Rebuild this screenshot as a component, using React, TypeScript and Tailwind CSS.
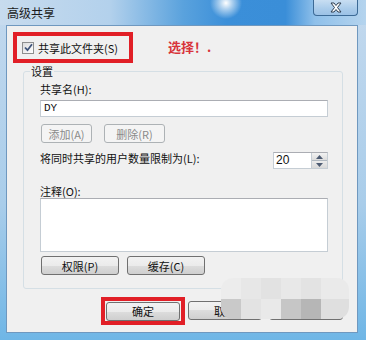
import React from "react";

const cjk = "font-['Noto_Sans_CJK_SC','Noto_Sans',sans-serif]";

function WinButton({ children, w, disabled = false }: { children: React.ReactNode; w: string; disabled?: boolean }) {
  return (
    <div
      className={
        `${w} h-[19px] flex items-center justify-center rounded-[3px] border text-[11px] leading-[14px] ` +
        (disabled
          ? "border-[#adb2b5] bg-[#f4f4f4] text-[#8a8a8a]"
          : "border-[#707070] bg-[linear-gradient(180deg,#f2f2f2_0%,#ebebeb_50%,#dddddd_50%,#cfcfcf_100%)] text-[#111]")
      }
    >
      {children}
    </div>
  );
}

export default function App() {
  return (
    <div className={`w-[366px] h-[340px] relative overflow-hidden bg-[linear-gradient(180deg,#c3d9ee_0%,#a9cdea_60%,#6fb6e6_100%)] ${cjk}`}>
      {/* title bar */}
      <div className="h-[25px] flex items-center pl-[7px] bg-[radial-gradient(circle_at_226px_3px,#ffffff_0px,rgba(255,255,255,0.6)_6px,rgba(255,255,255,0)_16px),linear-gradient(90deg,#c7dbee_0%,#b3d1ec_30%,#5aa2dd_50%,#3b8fd9_62%,#3a8ed8_78%,#8fc0ea_86%,#b5d4ee_100%)]">
        <span className="text-[12px] leading-[16px] text-[#1b1b1b]">高级共享</span>
      </div>
      {/* close button */}
      <div className="absolute top-0 left-[313px] w-[45px] h-[16px] rounded-b-[4px] border border-t-0 border-[#3c6a96] bg-[linear-gradient(180deg,#c8def2_0%,#a9cbea_60%,#9cc2e6_100%)] flex items-center justify-center">
        <svg width="14" height="11" viewBox="0 0 14 11">
          <path d="M2 1 L5 1 L7 3.5 L9 1 L12 1 L8.5 5.5 L12 10 L9 10 L7 7.5 L5 10 L2 10 L5.5 5.5 Z" fill="#ffffff" stroke="#2f3f52" strokeWidth="1" strokeLinejoin="round" />
        </svg>
      </div>

      {/* client area */}
      <div className="ml-[6px] w-[352px] h-[308px] bg-[#f0f0f0] border border-[#6f98bf] relative">
        {/* row: checkbox red box + 选择 */}
        <div className="flex items-start pt-[6px] pl-[6px]">
          <div className="w-[120px] h-[31px] border-4 border-[#e11f27] flex items-center pl-[5px] gap-[4px]">
            <div className="w-[12px] h-[12px] border border-[#8e8f8f] bg-[linear-gradient(135deg,#dcdcdc,#ffffff)] flex items-center justify-center">
              <svg width="9" height="9" viewBox="0 0 9 9">
                <path d="M1 4.5 L3.5 7.2 L8 1.2" fill="none" stroke="#3f547a" strokeWidth="1.8" />
              </svg>
            </div>
            <span className="text-[11px] leading-[14px] text-[#111] whitespace-nowrap">共享此文件夹(S)</span>
          </div>
          <span className="ml-[35px] mt-[7px] text-[13px] leading-[16px] font-bold text-[#d8343b] whitespace-nowrap">选择！.</span>
        </div>

        {/* group box */}
        <fieldset className="ml-[16px] mt-[1px] w-[320px] border border-[#d5dfe5] rounded-[3px] pl-[16px] pr-[14px] pb-[13px]">
          <legend className="ml-[-10px] px-[1px] text-[11px] leading-[14px] text-[#111]">设置</legend>
          <div className="mt-[4px] text-[11px] leading-[14px] text-[#111]">共享名(H):</div>
          <div className="mt-[4px] h-[17px] w-[288px] bg-white border border-[#c5cdd4] border-t-[#abadb3] flex items-center pl-[3px] font-['Liberation_Mono',monospace] text-[11px] text-[#111]">
            DY
          </div>
          <div className="mt-[7px] ml-[1px] flex gap-[12px]">
            <WinButton w="w-[51px]" disabled>添加(A)</WinButton>
            <WinButton w="w-[61px]" disabled>删除(R)</WinButton>
          </div>
          <div className="mt-[9px] flex items-start justify-between">
            <span className="mt-[-1px] text-[11px] leading-[14px] text-[#111]">将同时共享的用户数量限制为(L):</span>
            <div className="flex h-[17px] w-[55px] bg-white border border-[#c5cdd4] border-t-[#abadb3]">
              <span className="flex-1 pl-[2px] font-['Liberation_Sans',sans-serif] text-[12px] leading-[15px] text-[#111]">20</span>
              <div className="w-[16px] flex flex-col border-l border-[#c5cdd4]">
                <div className="flex-1 flex items-center justify-center bg-[linear-gradient(180deg,#f2f2f2,#dcdcdc)] border-b border-[#b0b8c0]">
                  <svg width="7" height="4" viewBox="0 0 7 4"><path d="M0 4 L3.5 0 L7 4 Z" fill="#4d5b72" /></svg>
                </div>
                <div className="flex-1 flex items-center justify-center bg-[linear-gradient(180deg,#ececec,#d8d8d8)]">
                  <svg width="7" height="4" viewBox="0 0 7 4"><path d="M0 0 L7 0 L3.5 4 Z" fill="#4d5b72" /></svg>
                </div>
              </div>
            </div>
          </div>
          <div className="mt-[15px] text-[11px] leading-[14px] text-[#111]">注释(O):</div>
          <div className="h-[54px] w-[288px] bg-white border border-[#c5cdd4] border-t-[#abadb3]" />
          <div className="mt-[4px] ml-[1px] flex gap-[8px]">
            <WinButton w="w-[78px]">权限(P)</WinButton>
            <WinButton w="w-[78px]">缓存(C)</WinButton>
          </div>
        </fieldset>

        {/* bottom buttons */}
        <div className="mt-[8px] ml-[94px] flex items-start">
          <div className="w-[84px] h-[28px] border-4 border-[#e11f27] flex items-center justify-center">
            <WinButton w="w-[74px]">确定</WinButton>
          </div>
          <div className="mt-[4px] ml-[3px] flex gap-[7px]">
            <WinButton w="w-[74px]">取消</WinButton>
            <WinButton w="w-[74px]">应用(A)</WinButton>
          </div>
        </div>

        {/* mosaic blur overlay */}
        <div className="absolute left-[214px] top-[252px] w-[128px] h-[41px] rounded-[12px] overflow-hidden grid grid-cols-[20px_20px_20px_20px_20px_28px] grid-rows-[21px_20px]">
          <div className="bg-[#ececec]" />
          <div className="bg-[#e7e7e7]" />
          <div className="bg-[#e2e2e2]" />
          <div className="bg-[#e8e8e8]" />
          <div className="bg-[#e3e3e3]" />
          <div className="bg-[#eaeaea]" />
          <div className="bg-[#c9c9c9]" />
          <div className="bg-[#e3e3e3]" />
          <div className="bg-[#e9e9e9]" />
          <div className="bg-[#c6c6c6]" />
          <div className="bg-[#b6b6b6]" />
          <div className="bg-[#dfdfdf]" />
        </div>
      </div>
    </div>
  );
}
